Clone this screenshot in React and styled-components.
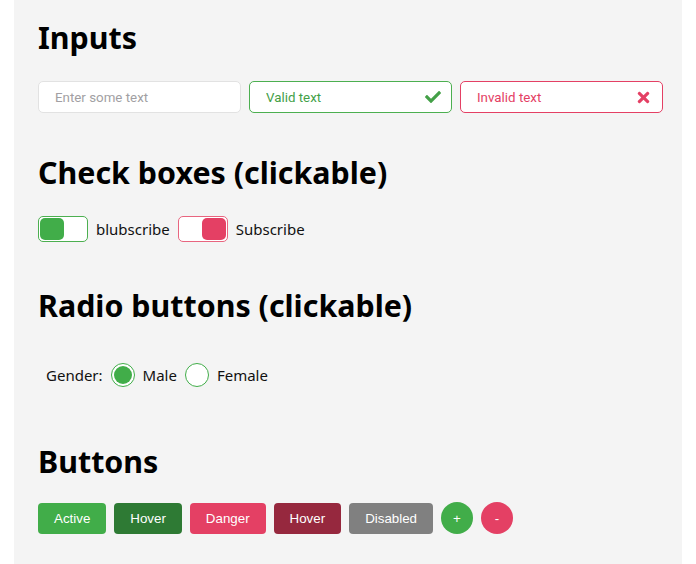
import React from 'react'
import styled, { createGlobalStyle } from 'styled-components'
import { FaCheck, FaTimes } from 'react-icons/fa'

const GlobalStyle = createGlobalStyle`
  body {
    margin: 0;
    background: #fff;
    font-family: 'Noto Sans', 'Open Sans', sans-serif;
  }
`

const green = '#41ad49'
const darkGreen = '#2e7a34'
const red = '#e44064'
const darkRed = '#96283e'

const Panel = styled.main`
  margin-left: 14px;
  width: 668px;
  min-height: 564px;
  box-sizing: border-box;
  background: #f4f4f4;
  padding: 18px 19px 0 24px;
`

const Section = styled.section`
  margin-top: ${p => p.top || 0}px;
`

const Title = styled.h2`
  margin: 0 0 ${p => p.gap || 23}px;
  font-size: 30.4px;
  line-height: 40px;
  font-weight: 700;
  color: #000;
`

const Row = styled.div`
  display: flex;
  align-items: center;
  gap: ${p => p.gap || 8}px;
  padding-left: ${p => p.indent || 0}px;
`

const Field = styled.label`
  display: flex;
  flex-shrink: 0;
  align-items: center;
  width: 203px;
  height: 32px;
  box-sizing: border-box;
  padding: 0 10px 0 16px;
  background: #fff;
  border: 1px solid ${p => p.color || '#e2e2e2'};
  border-radius: 5px;
  color: ${p => p.color || '#999'};
`

const Input = styled.input`
  flex: 1;
  min-width: 0;
  border: none;
  outline: none;
  padding: 0;
  background: transparent;
  font-family: Roboto, 'Liberation Sans', sans-serif;
  font-size: 13.33px;
  color: ${p => p.tone || 'inherit'};

  &::placeholder {
    color: #a29fa3;
  }
`

const Toggle = styled.span`
  display: flex;
  justify-content: ${p => (p.on ? 'flex-start' : 'flex-end')};
  width: 50px;
  height: 26px;
  box-sizing: border-box;
  padding: 1px;
  background: #fff;
  border: 1px solid ${p => p.border};
  border-radius: 5px;
  cursor: pointer;
`

const Knob = styled.span`
  width: 24px;
  height: 22px;
  background: ${p => p.color};
  border-radius: 5px;
`

const Text = styled.span`
  font-size: 15px;
  color: #111;
`

const Radio = styled.span`
  display: flex;
  align-items: center;
  justify-content: center;
  width: 24px;
  height: 24px;
  box-sizing: border-box;
  border: 1px solid ${green};
  border-radius: 50%;
  background: #fff;
  cursor: pointer;

  &::after {
    content: '';
    width: 18px;
    height: 18px;
    border-radius: 50%;
    background: ${p => (p.checked ? green : 'transparent')};
  }
`

const Button = styled.button`
  height: 31px;
  padding: 0 16px;
  border: none;
  border-radius: 4px;
  background: ${p => p.bg};
  color: #fff;
  font-family: 'Liberation Sans', Arial, sans-serif;
  font-size: 13.33px;
  cursor: ${p => (p.disabled ? 'default' : 'pointer')};
`

const RoundButton = styled(Button)`
  width: 32px;
  height: 32px;
  padding: 0;
  border-radius: 50%;
`

export default function App() {
  return (
    <>
      <GlobalStyle />
      <Panel>
        <Section>
          <Title>Inputs</Title>
          <Row>
            <Field>
              <Input placeholder="Enter some text" />
            </Field>
            <Field color="#4caf50">
              <Input defaultValue="Valid text" tone="#43a047" />
              <FaCheck size={16} color="#43a047" />
            </Field>
            <Field color={red}>
              <Input defaultValue="Invalid text" />
              <FaTimes size={17} color={red} />
            </Field>
          </Row>
        </Section>

        <Section top={40}>
          <Title>Check boxes (clickable)</Title>
          <Row>
            <Toggle on border="#4caf50">
              <Knob color={green} />
            </Toggle>
            <Text>blubscribe</Text>
            <Toggle border="#e8657f">
              <Knob color={red} />
            </Toggle>
            <Text>Subscribe</Text>
          </Row>
        </Section>

        <Section top={44}>
          <Title gap={37}>Radio buttons (clickable)</Title>
          <Row indent={8}>
            <Text>Gender:</Text>
            <Radio checked />
            <Text>Male</Text>
            <Radio />
            <Text>Female</Text>
          </Row>
        </Section>

        <Section top={55}>
          <Title gap={20}>Buttons</Title>
          <Row>
            <Button bg={green}>Active</Button>
            <Button bg={darkGreen}>Hover</Button>
            <Button bg={red}>Danger</Button>
            <Button bg={darkRed}>Hover</Button>
            <Button bg="#808080" disabled>Disabled</Button>
            <RoundButton bg={green}>+</RoundButton>
            <RoundButton bg={red}>-</RoundButton>
          </Row>
        </Section>
      </Panel>
    </>
  )
}
